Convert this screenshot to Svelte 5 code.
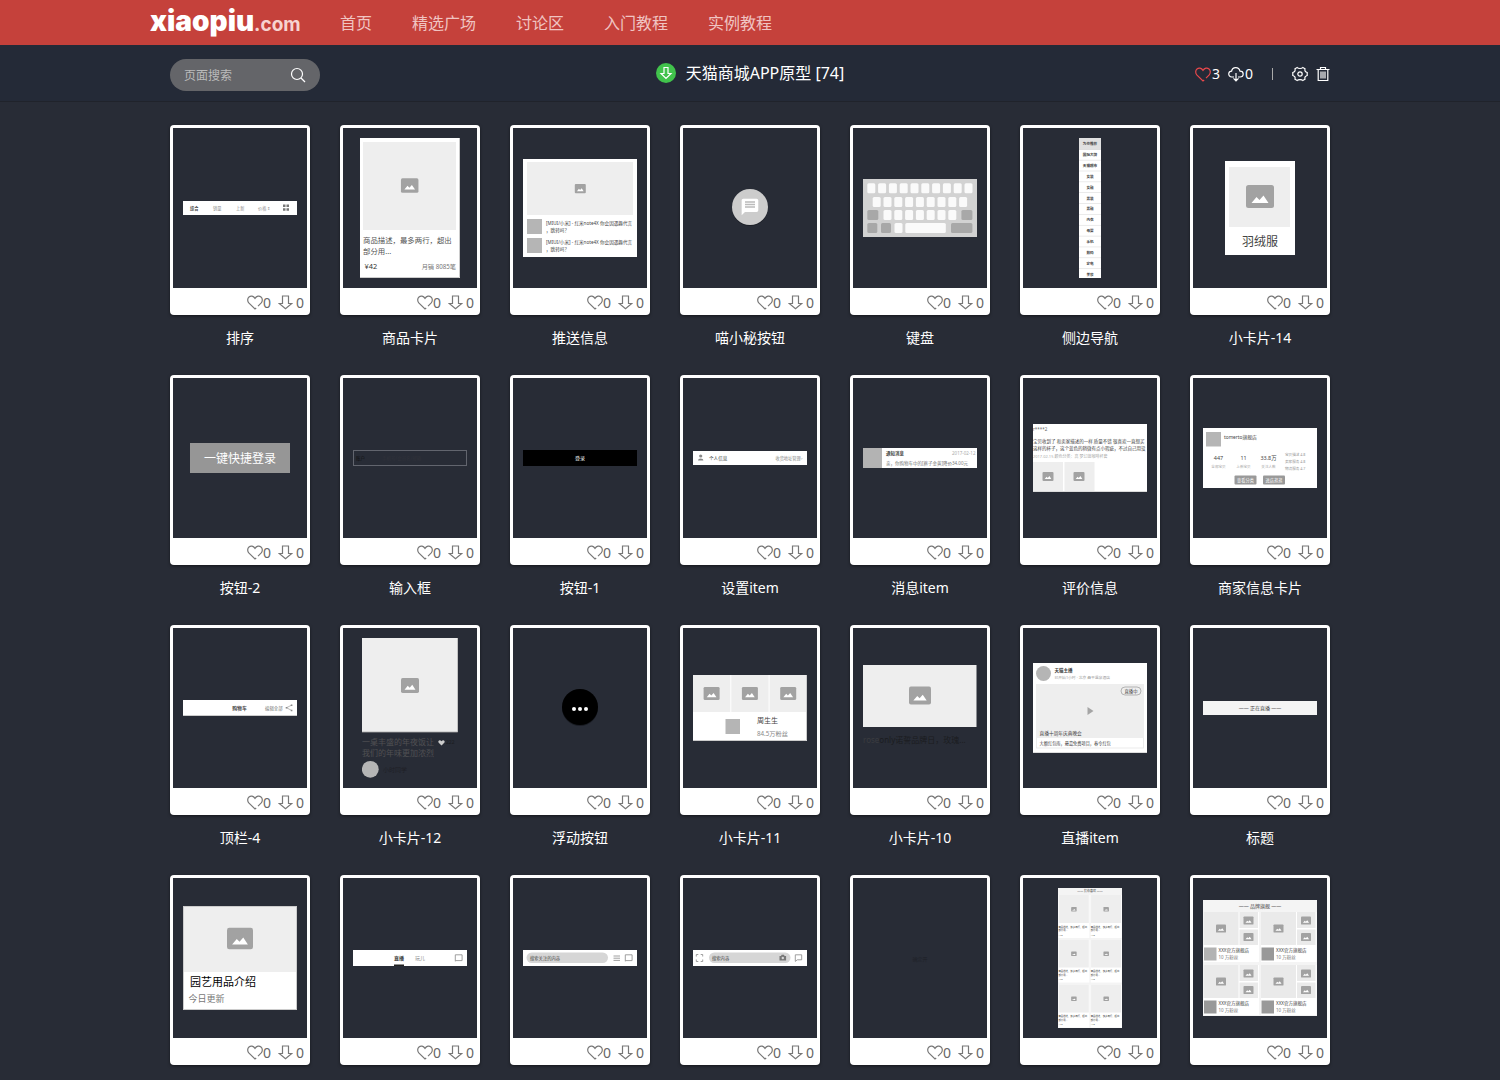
<script lang="ts">
  interface Widget {
    id: string;
    name?: string;
    // x, y, width and height of the preview inside the 134x160 frame
    box: number[];
    bg?: string;
  }

  const links = ['首页', '精选广场', '讨论区', '入门教程', '实例教程'];

  const widgets: Widget[] = [
    { id: 'sort', name: '排序', box: [10, 73, 114, 14] },
    { id: 'goods', name: '商品卡片', box: [17, 10, 100, 140] },
    { id: 'push', name: '推送信息', box: [10, 31, 114, 98] },
    { id: 'chat', name: '喵小秘按钮', box: [47, 59, 40, 42], bg: 'none' },
    { id: 'keyboard', name: '键盘', box: [10, 51, 114, 58], bg: '#d2d2d2' },
    { id: 'side', name: '侧边导航', box: [56, 10, 22, 140] },
    { id: 'card14', name: '小卡片-14', box: [32, 33, 70, 94] },
    { id: 'button2', name: '按钮-2', box: [17, 65, 100, 30], bg: '#969696' },
    { id: 'input', name: '输入框', box: [10, 72, 114, 16], bg: 'none' },
    { id: 'button1', name: '按钮-1', box: [10, 72, 114, 16], bg: '#000' },
    { id: 'setting', name: '设置item', box: [10, 73, 114, 14] },
    { id: 'message', name: '消息item', box: [10, 70, 114, 20] },
    { id: 'review', name: '评价信息', box: [10, 46, 114, 68] },
    { id: 'shop', name: '商家信息卡片', box: [10, 50, 114, 60] },
    { id: 'top4', name: '顶栏-4', box: [10, 72, 114, 16] },
    { id: 'card12', name: '小卡片-12', box: [19, 10, 96, 140], bg: 'none' },
    { id: 'float', name: '浮动按钮', box: [47, 59, 40, 42], bg: 'none' },
    { id: 'card11', name: '小卡片-11', box: [10, 47, 114, 66] },
    { id: 'card10', name: '小卡片-10', box: [10, 37, 114, 86], bg: 'none' },
    { id: 'live', name: '直播item', box: [10, 35, 114, 90] },
    { id: 'title', name: '标题', box: [10, 73, 114, 14], bg: '#f4f4f4' },
    { id: 'garden', box: [10, 28, 114, 104] },
    { id: 'tabs', box: [10, 72, 114, 16] },
    { id: 'search1', box: [10, 72, 114, 16] },
    { id: 'search2', box: [10, 72, 114, 16] },
    { id: 'blank', box: [10, 72, 114, 16], bg: 'none' },
    { id: 'list', box: [35, 10, 64, 140], bg: '#f4f4f4' },
    { id: 'brand', box: [10, 22, 114, 116], bg: '#f4f4f4' }
  ];

  const categories = ['为你推荐', '国际大牌', '天猫超市', '女装', '女鞋', '男装', '男鞋', '内衣', '母婴', '手机', '数码', '家电', '美妆'];

  // x, y, width, dark
  const keys: [number, number, number, boolean][] = [
    ...Array.from({ length: 10 }, (_, i) => [14.3 + i * 10.8, 55.3, 8, false] as [number, number, number, boolean]),
    ...Array.from({ length: 9 }, (_, i) => [19.7 + i * 10.8, 69, 8, false] as [number, number, number, boolean]),
    ...Array.from({ length: 7 }, (_, i) => [30.5 + i * 10.8, 82, 8, false] as [number, number, number, boolean]),
    [14.3, 82, 11, true],
    [108.4, 82, 11, true],
    [14.3, 95, 10, true],
    [28, 95, 10, true],
    [41.5, 95, 8, false],
    [52.3, 95, 40.5, false],
    [98, 95, 21.4, true]
  ];
</script>

{#snippet heart()}
  <svg class="icon" width="16" height="15" viewBox="0 0 16 15" aria-hidden="true">
    <path d="M9.2 13 8 14 2 8.2C.2 6.200.3 3.400 2 2 3.800.5 6.400.9 8 3.400 9.600.9 12.200.5 14 2 15.700 3.400 15.800 6.200 14 8.200L11 11.200" />
  </svg>
{/snippet}

{#snippet arrow()}
  <svg class="icon" width="15" height="15" viewBox="0 0 15 15" aria-hidden="true">
    <path d="M4.500 1H10.500V8.500H13.800L7.500 13.800 1.200 8.500H4.500Z" />
  </svg>
{/snippet}

{#snippet pic(cx: number, cy: number, w: number)}
  <g transform="translate({cx - w / 2} {cy - w * 0.41}) scale({w / 28})">
    <rect width="28" height="23" rx="2.500" fill="#a2a2a2" />
    <path d="M5.500 18 10.500 12 13.500 15 17.500 10.500 22.500 18Z" fill="#fff" />
  </g>
{/snippet}

{#snippet preview(id: string)}
  {#if id === 'sort'}
    <text x="17" y="81.700" font-size="4.200" font-weight="700">综合</text>
    <g font-size="4.200" fill="#888">
      <text x="40" y="81.700">销量</text>
      <text x="63" y="81.700">上新</text>
      <text x="85" y="81.700">价格 ⇕</text>
    </g>
    <path d="M110 76.500h2.500v2.500h-2.500zM113.500 76.500h2.500v2.500h-2.500zM110 80.300h2.500v2.500h-2.500zM113.500 80.300h2.500v2.500h-2.500z" fill="#777" />
  {:else if id === 'goods'}
    <rect x="20" y="14" width="93" height="88" fill="#eee" />
    {@render pic(66.7, 57.5, 17.5)}
    <g font-size="7.400" fill="#555">
      <text x="20" y="114.500">商品描述，最多两行，超出</text>
      <text x="20" y="125.500">部分用...</text>
      <text x="21.500" y="140.800" fill="#333">¥42</text>
      <text x="113" y="140.500" font-size="6.200" text-anchor="end" fill="#777">月销 8085笔</text>
    </g>
    <path d="M116.500 10v139.500H17" stroke="#ccc" fill="none" />
  {:else if id === 'push'}
    <rect x="14" y="34" width="106" height="53" fill="#eee" />
    {@render pic(67.3, 60.6, 11)}
    {#each [91, 110] as y}
      <rect x="14" {y} width="15" height="15" fill="#b5b5b5" />
      <text x="33" y={y + 6} font-size="4.600">[MIUI/小米] - 红米note4X 你会因遇趣代言</text>
      <text x="33" y={y + 13} font-size="4.600">，跳转吗？</text>
    {/each}
  {:else if id === 'chat'}
    <circle cx="67" cy="80" r="18" fill="#1d2028" />
    <circle cx="67" cy="79" r="18" fill="#ccc" />
    <path transform="translate(57 69) scale(.83)" fill="#fff" d="M20 2H4c-1.100 0-2 .9-2 2v18l4-4h14c1.100 0 2-.9 2-2V4c0-1.100-.9-2-2-2z" />
    <path d="M62 73.700h10M62 76.200h10M62 78.700h10" transform="translate(0 .3)" stroke="#bbb" stroke-width="1.300" />
  {:else if id === 'keyboard'}
    {#each keys as [x, y, width, dark]}
      <rect {x} {y} {width} height="10" rx="1.500" fill={dark ? '#a8a8a8' : '#fafafa'} />
    {/each}
  {:else if id === 'side'}
    <rect x="56" y="10" width="22" height="12" fill="#e0e0e0" />
    {#each categories as label, i}
      <text x="67" y={17.3 + i * 10.85} font-size="3.600" font-weight="700" text-anchor="middle">{label}</text>
      <rect x="56" y={21 + i * 10.85} width="22" height=".6" fill="#ddd" />
    {/each}
  {:else if id === 'card14'}
    <rect x="36" y="39" width="61" height="60" fill="#eee" />
    {@render pic(67, 68.5, 28)}
    <text x="67" y="118" font-size="12" text-anchor="middle">羽绒服</text>
  {:else if id === 'button2'}
    <text x="67" y="85" font-size="12" text-anchor="middle" fill="#fff">一键快捷登录</text>
  {:else if id === 'input'}
    <rect x="10.500" y="72.500" width="113" height="15" fill="none" stroke="#62656e" />
    <text x="13" y="81.700" font-size="4.500" fill="#111">账户</text>
    <text x="39" y="81.700" font-size="4.500" fill="#30323a">手机号/会员名/邮箱</text>
  {:else if id === 'button1'}
    <text x="67" y="82" font-size="5" text-anchor="middle" fill="#fff">登录</text>
  {:else if id === 'setting'}
    <circle cx="17.700" cy="78" r="1.600" fill="#888" />
    <path d="M15 82.500q0-2 2.700-2t2.700 2z" fill="#888" />
    <text x="26" y="81.700" font-size="4.600">个人信息</text>
    <text x="120" y="81.500" font-size="4.200" text-anchor="end" fill="#888">收货地址管理&gt;</text>
  {:else if id === 'message'}
    <rect x="10" y="70" width="19" height="20" fill="#b3b3b3" />
    <text x="33" y="77" font-size="4.500" font-weight="700">通知消息</text>
    <text x="99" y="77" font-size="4.500" fill="#aaa">2017-02-12</text>
    <text x="33" y="87" font-size="4.500" fill="#777">亲，你购物车中的[裤子金黄]降价34.00元</text>
  {:else if id === 'review'}
    <text x="10" y="53" font-size="4.500" fill="#666">r****2</text>
    <text x="10" y="64.500" font-size="4.500">宝贝收到了 和卖家描述的一样 质量不错 很喜欢一直想买</text>
    <text x="10" y="71.500" font-size="4.500">这样的杯子，这个蓝色的稍微有点小瑕疵，不过自己用没</text>
    <text x="10" y="79.500" font-size="4" fill="#aaa">2017.02.15 颜色分类：高 梦幻蓝咖啡杯套</text>
    <rect x="10" y="84" width="30" height="29" fill="#eee" />
    <rect x="41.500" y="84" width="30" height="29" fill="#eee" />
    {@render pic(25, 98.5, 11)}
    {@render pic(56, 98.5, 11)}
    <rect x="10" y="113.300" width="114" height=".7" fill="#ccc" />
  {:else if id === 'shop'}
    <rect x="13" y="54" width="15" height="14.500" fill="#b5b5b5" />
    <text x="31" y="61" font-size="4.800">tomerto旗舰店</text>
    <g text-anchor="middle">
      {#each [['447', '全部宝贝', 25.5], ['11', '上新宝贝', 50.5], ['33.8万', '关注人数', 75.5]] as [count, label, x]}
        <text {x} y="82" font-size="5.400">{count}</text>
        <text {x} y="90" font-size="3.600" fill="#aaa">{label}</text>
      {/each}
    </g>
    <g font-size="3.600" fill="#999">
      <text x="92" y="78">宝贝描述 4.8</text>
      <text x="92" y="85">卖家服务 4.8</text>
      <text x="92" y="92">物流服务 4.7</text>
    </g>
    <rect x="41.500" y="97.500" width="22" height="9" rx="1" fill="#999" />
    <rect x="70" y="97.500" width="22" height="9" rx="1" fill="#999" />
    <g font-size="4.200" fill="#fff" text-anchor="middle">
      <text x="52.500" y="103.500">查看分类</text>
      <text x="81" y="103.500">进店逛逛</text>
    </g>
  {:else if id === 'top4'}
    <text x="66.500" y="81.700" font-size="4.800" font-weight="700" text-anchor="middle">购物车</text>
    <text x="92" y="81.500" font-size="4.400" fill="#777">编辑全部</text>
    <path d="M118.500 77.200 113.500 79.700 118.500 82.400" fill="none" stroke="#888" stroke-width=".6" />
    <path d="M117.800 76.500h1.600v1.600h-1.600zM112.700 79h1.600v1.600h-1.600zM117.800 81.700h1.600v1.600h-1.600z" fill="#888" />
    <rect x="10" y="87" width="114" height="1" fill="#ccc" />
  {:else if id === 'card12'}
    <rect x="19" y="10" width="96" height="94" fill="#eee" />
    <path d="M114.700 10v94H19" fill="none" stroke="#aaa" stroke-width=".8" />
    {@render pic(67, 57.5, 18)}
    <g font-size="8" fill="#505053">
      <text x="19" y="116.500">一桌丰盛的年夜饭让</text>
      <text x="19" y="127.500">我们的年味更加浓烈</text>
    </g>
    <path d="M98.500 117.500 95.500 114.400c-.9-1.800 1.500-3.200 3-1.200 1.500-2 3.900-.6 3 1.200z" fill="#ccc" />
    <text x="103" y="116" font-size="5" fill="#1b1c20">222</text>
    <circle cx="27.300" cy="141.300" r="8.400" fill="#b5b5b5" />
    <text x="40" y="143.500" font-size="6" fill="#1f2026">小时同学</text>
  {:else if id === 'float'}
    <circle cx="67" cy="80" r="18" fill="#1a1d24" />
    <circle cx="67" cy="79" r="18" fill="#000" />
    {#each [61, 67, 73] as cx}
      <circle {cx} cy="81" r="2" fill="#fff" />
    {/each}
  {:else if id === 'card11'}
    {#each [10, 48.3, 86.6] as x}
      <rect {x} y="47" width="37.300" height="37" fill="#eee" />
      {@render pic(x + 18.6, 65.5, 16)}
    {/each}
    <rect x="42.500" y="91" width="14.500" height="15" fill="#b5b5b5" />
    <text x="74" y="94.500" font-size="7">周生生</text>
    <text x="74" y="108" font-size="6.200" fill="#888">84.5万粉丝</text>
    <path d="M123.500 47v65.500H10" stroke="#ccc" fill="none" />
  {:else if id === 'card10'}
    <rect x="10" y="37" width="113.500" height="62" fill="#eee" />
    {@render pic(67, 67.5, 22)}
    <text x="10" y="115" font-size="8" fill="#3b3c40">rose<tspan fill="#1b1c20">only诺誓品牌日，玫瑰...</tspan></text>
  {:else if id === 'live'}
    <circle cx="20.500" cy="45.500" r="7.500" fill="#b5b5b5" />
    <text x="31.500" y="43.500" font-size="4.500" font-weight="700">天猫主播</text>
    <text x="31.500" y="50.500" font-size="3.800" fill="#999">已开始1小时 · 北京 昌平温泉酒店</text>
    <rect x="13.500" y="56.500" width="107" height="63.500" fill="#fff" stroke="#e6e6e6" stroke-width=".8" />
    <rect x="13" y="56" width="108" height="54" fill="#eee" />
    <rect x="98" y="59" width="20" height="8" rx="4" fill="#eee" stroke="#999" stroke-width=".7" />
    <text x="108" y="64.700" font-size="4.300" text-anchor="middle">直播中</text>
    <path d="M64.500 79v8l6-4z" fill="#a5a5a5" />
    <text x="16.600" y="106.500" font-size="4.700">直播十周年庆典晚会</text>
    <text x="16.600" y="117" font-size="4.200">大额红包雨，最嘉免费项目，春令红包</text>
    <rect x="10" y="124" width="114" height="1" fill="#ddd" />
  {:else if id === 'title'}
    <text x="67" y="82" font-size="5" text-anchor="middle">—— 正在直播 ——</text>
  {:else if id === 'garden'}
    <rect x="10" y="28" width="114" height="66" fill="#eee" />
    {@render pic(67, 60.5, 26)}
    <text x="17" y="108" font-size="11" fill="#000">园艺用品介绍</text>
    <text x="15.500" y="124" font-size="9" fill="#777">今日更新</text>
    <rect x="10.500" y="28.500" width="113" height="103" fill="none" stroke="#ccc" />
  {:else if id === 'tabs'}
    <text x="51" y="81.700" font-size="5" font-weight="700">直播</text>
    <text x="72" y="81.700" font-size="5" fill="#888">玩儿</text>
    <rect x="51" y="86.500" width="10" height="1.500" fill="#222" />
    <path d="M112.300 76.800h6.800v5.800h-6.800zM112.300 82.600v.8" fill="none" stroke="#888" stroke-width=".8" />
  {:else if id === 'search1'}
    <rect x="13.500" y="74.500" width="81.500" height="10.500" rx="5.200" fill="#d6d6d6" />
    <text x="17" y="81.500" font-size="4.300">搜索关注的内容</text>
    <path d="M100.500 78h6.500M100.500 80.200h6.500M100.500 82.400h6.500" stroke="#888" stroke-width=".8" />
    <path d="M112.300 76.800h6.800v5.800h-6.800zM112.300 82.600v.8" fill="none" stroke="#888" stroke-width=".8" />
  {:else if id === 'search2'}
    <path d="M13.300 78.500v-2h2M17.700 76.500h2v2M19.700 81.500v2h-2M15.300 83.500h-2v-2" fill="none" stroke="#888" stroke-width=".8" />
    <rect x="26" y="74.500" width="81.500" height="10.500" rx="5.200" fill="#d6d6d6" />
    <text x="29" y="81.500" font-size="4.300">搜索内容</text>
    <path d="M96.500 78h1.500l.7-1.200h2.200l.7 1.200h1.500v4.500h-6.600z" fill="#777" />
    <circle cx="99.800" cy="80" r="1.200" fill="#d6d6d6" />
    <path d="M112.300 76.800h6.400v5h-4.400l-2 1.600z" fill="none" stroke="#888" stroke-width=".8" />
  {:else if id === 'blank'}
    <text x="67" y="82.500" font-size="5" text-anchor="middle" fill="#1f2128">确定开</text>
  {:else if id === 'list'}
    <text x="67" y="14" font-size="3" text-anchor="middle">—— 猜你喜欢 ——</text>
    {#each [17, 61.5, 106.5] as y}
      {#each [35.4, 67.7] as x}
        <rect {x} {y} width="31" height="43" fill="#fff" />
        <rect x={x + 0.4} {y} width="30" height="28" fill="#eee" />
        {@render pic(x + 15.5, y + 14.3, 5.5)}
        <g font-size="2.400">
          <text {x} y={y + 32.5}>商品描述，最多两行，超出</text>
          <text {x} y={y + 36}>部分用...</text>
          <text {x} y={y + 40.5}>¥42</text>
        </g>
      {/each}
    {/each}
  {:else if id === 'brand'}
    <text x="67" y="30" font-size="5" text-anchor="middle">—— 品牌旗舰 ——</text>
    {#each [34, 87] as y}
      {#each [10.5, 68] as x}
        <rect {x} {y} width="55.500" height="50" fill="#fff" />
        <rect {x} {y} width="35" height="33" fill="#eaeaea" />
        <rect x={x + 36} {y} width="18.500" height="16" fill="#eaeaea" />
        <rect x={x + 36} y={y + 17.5} width="18.500" height="15.500" fill="#eaeaea" />
        {@render pic(x + 17.5, y + 16.5, 10)}
        {@render pic(x + 45, y + 8.5, 10)}
        {@render pic(x + 45, y + 25, 10)}
        <rect x={x + 0.5} y={y + 35.5} width="12.500" height="13" fill={x < 20 && y < 50 ? '#b3b3b3' : '#999'} />
        <text x={x + 15} y={y + 39.8} font-size="4.500">XXX官方旗舰店</text>
        <text x={x + 15} y={y + 47} font-size="4.500" fill="#777">10 万粉丝</text>
      {/each}
    {/each}
  {/if}
{/snippet}

<header class="topbar">
  <div class="topbar-inner">
    <a class="logo" href="#home">xiaopiu<span>.com</span></a>
    <nav>
      {#each links as link}
        <a href="#{link}">{link}</a>
      {/each}
    </nav>
  </div>
</header>

<div class="subbar">
  <div class="subbar-inner">
    <form class="search" role="search">
      <input type="text" placeholder="页面搜索" aria-label="页面搜索" />
      <button type="button" aria-label="搜索">
        <svg class="icon" width="16" height="16" viewBox="0 0 16 16">
          <circle cx="7" cy="7" r="5.500" />
          <path d="M11 11 15 15" />
        </svg>
      </button>
    </form>

    <div class="project">
      <span class="badge">
        <svg class="icon" width="14" height="14" viewBox="0 0 14 14" aria-hidden="true">
          <path d="M5 1.500H9V7.500H12L7 12.500 2 7.500H5Z" />
        </svg>
      </span>
      <h1>天猫商城APP原型 [74]</h1>
    </div>

    <div class="actions">
      <button type="button" class="like" aria-label="喜欢 3">{@render heart()}<span>3</span></button>
      <button type="button" aria-label="下载 0">
        <svg class="icon" width="16" height="16" viewBox="0 0 16 16">
          <path d="M6 11H4C1.500 11 .5 9 .8 7.500 1 6 2.200 5.200 3.600 5.200 4 3 5.600 1.700 7.700 1.700 9.800 1.700 11.500 3 12 5.200 14 5.200 15.200 6.500 15.200 8 15.200 9.800 14 11 12 11H10M8 7V14.500M5.500 12.300 8 14.800 10.500 12.300" />
        </svg>
        <span>0</span>
      </button>
      <i class="divider"></i>
      <button type="button" aria-label="设置">
        <svg class="icon" width="16" height="16" viewBox="0 0 16 16">
          <path d="M5.200 1.500C6.200 2.800 9.800 2.800 10.800 1.500L13 2.800C12.400 4.500 13.300 6 15.200 6.500V9.500C13.300 10 12.400 11.500 13 13.200L10.800 14.500C9.800 13.200 6.200 13.200 5.200 14.500L3 13.200C3.600 11.500 2.700 10 .8 9.500V6.500C2.700 6 3.600 4.500 3 2.800Z" />
          <circle cx="8" cy="8" r="2.200" />
        </svg>
      </button>
      <button type="button" aria-label="删除">
        <svg class="icon" width="14" height="16" viewBox="0 0 14 16">
          <path d="M.5 3.500H13.500M4.500 3.500V1.500H9.500V3.500M2.200 3.500V14.500H11.800V3.500M5 5.500V12.500M7 5.500V12.500M9 5.500V12.500" />
        </svg>
      </button>
    </div>
  </div>
</div>

<main class="grid">
  {#each widgets as widget (widget.id)}
    <article>
      <div class="card">
        <div class="frame">
          <svg
            class="preview"
            width={widget.box[2]}
            height={widget.box[3]}
            viewBox={widget.box.join(' ')}
            aria-hidden="true"
          >
            <rect
              x={widget.box[0]}
              y={widget.box[1]}
              width={widget.box[2]}
              height={widget.box[3]}
              fill={widget.bg ?? '#fff'}
            />
            {@render preview(widget.id)}
          </svg>
        </div>
        <div class="stats">
          <button type="button" aria-label="喜欢 0">{@render heart()}<span>0</span></button>
          <button type="button" class="download" aria-label="下载 0">{@render arrow()}<span>0</span></button>
        </div>
      </div>
      {#if widget.name}
        <h2>{widget.name}</h2>
      {/if}
    </article>
  {/each}
</main>

<style>
  :global(body) {
    margin: 0;
    background: #282c36;
    color: #fff;
    font-family: 'Noto Sans', 'Noto Sans CJK SC', sans-serif;
    font-size: 14px;
  }

  a {
    color: inherit;
    text-decoration: none;
  }

  button {
    display: flex;
    align-items: center;
    padding: 0;
    border: none;
    background: none;
    color: inherit;
    font: inherit;
    line-height: 20px;
    cursor: pointer;
  }

  .icon {
    display: block;
    flex-shrink: 0;
    fill: none;
    stroke: currentColor;
    stroke-width: 1.2;
  }

  .topbar {
    background: #c5413b;
  }

  .topbar-inner {
    display: flex;
    align-items: center;
    gap: 40px;
    max-width: 1200px;
    height: 45px;
    margin: 0 auto;
  }

  .logo {
    width: 150px;
    font-family: Inter, sans-serif;
    font-size: 28px;
    font-weight: 900;
    line-height: 45px;
    white-space: nowrap;
  }

  .logo span {
    font-size: 19px;
    font-weight: 700;
    color: #f7d3d1;
  }

  nav {
    display: flex;
    gap: 40px;
    padding-bottom: 2px;
    font-size: 16px;
    color: #f0c4c2;
  }

  .subbar {
    background: #242a37;
    border-bottom: 1px solid #20232b;
  }

  .subbar-inner {
    display: grid;
    grid-template-columns: 1fr auto 1fr;
    align-items: center;
    max-width: 1160px;
    height: 56px;
    margin: 0 auto;
  }

  .search {
    display: flex;
    align-items: center;
    box-sizing: border-box;
    width: 150px;
    height: 32px;
    margin-top: 4px;
    padding: 0 14px;
    border-radius: 16px;
    background: #646569;
  }

  .search input {
    flex: 1;
    min-width: 0;
    padding: 0;
    border: none;
    outline: none;
    background: none;
    color: #fff;
    font: inherit;
    font-size: 12px;
  }

  .search input::placeholder {
    color: #bbb;
  }

  .project {
    display: flex;
    align-items: center;
    gap: 10px;
  }

  .badge {
    display: flex;
    align-items: center;
    justify-content: center;
    width: 20px;
    height: 20px;
    border-radius: 50%;
    background: #41c34c;
  }

  h1 {
    margin: 0;
    font-size: 16px;
    font-weight: 400;
    line-height: 24px;
  }

  .actions {
    display: flex;
    justify-content: flex-end;
    align-items: center;
    gap: 8px;
    padding-top: 2px;
  }

  .actions button {
    gap: 1px;
  }

  .like .icon {
    color: #e9484b;
  }

  .divider {
    width: 1px;
    height: 12px;
    margin: 0 11px;
    background: #aaa;
  }

  .grid {
    display: grid;
    grid-template-columns: repeat(auto-fill, 140px);
    column-gap: 30px;
    max-width: 1160px;
    margin: 23px auto 0;
  }

  article {
    padding-bottom: 27px;
  }

  .card {
    padding: 3px 3px 0;
    border-radius: 4px;
    background: #fff;
    box-shadow: 0 1px 3px rgba(0, 0, 0, 0.5);
  }

  .frame {
    display: flex;
    align-items: center;
    justify-content: center;
    height: 160px;
    background: #282c36;
  }

  .preview {
    display: block;
    fill: #444;
  }

  .stats {
    display: flex;
    justify-content: flex-end;
    align-items: center;
    gap: 7px;
    height: 27px;
    padding: 2px 3px 0 0;
    box-sizing: border-box;
    color: #666;
  }

  .stats .icon {
    stroke: #777;
    stroke-width: 1.2;
  }

  .stats .download {
    gap: 3px;
  }

  h2 {
    margin: 13px 0 0;
    font-size: 14px;
    font-weight: 400;
    line-height: 20px;
    text-align: center;
  }
</style>
